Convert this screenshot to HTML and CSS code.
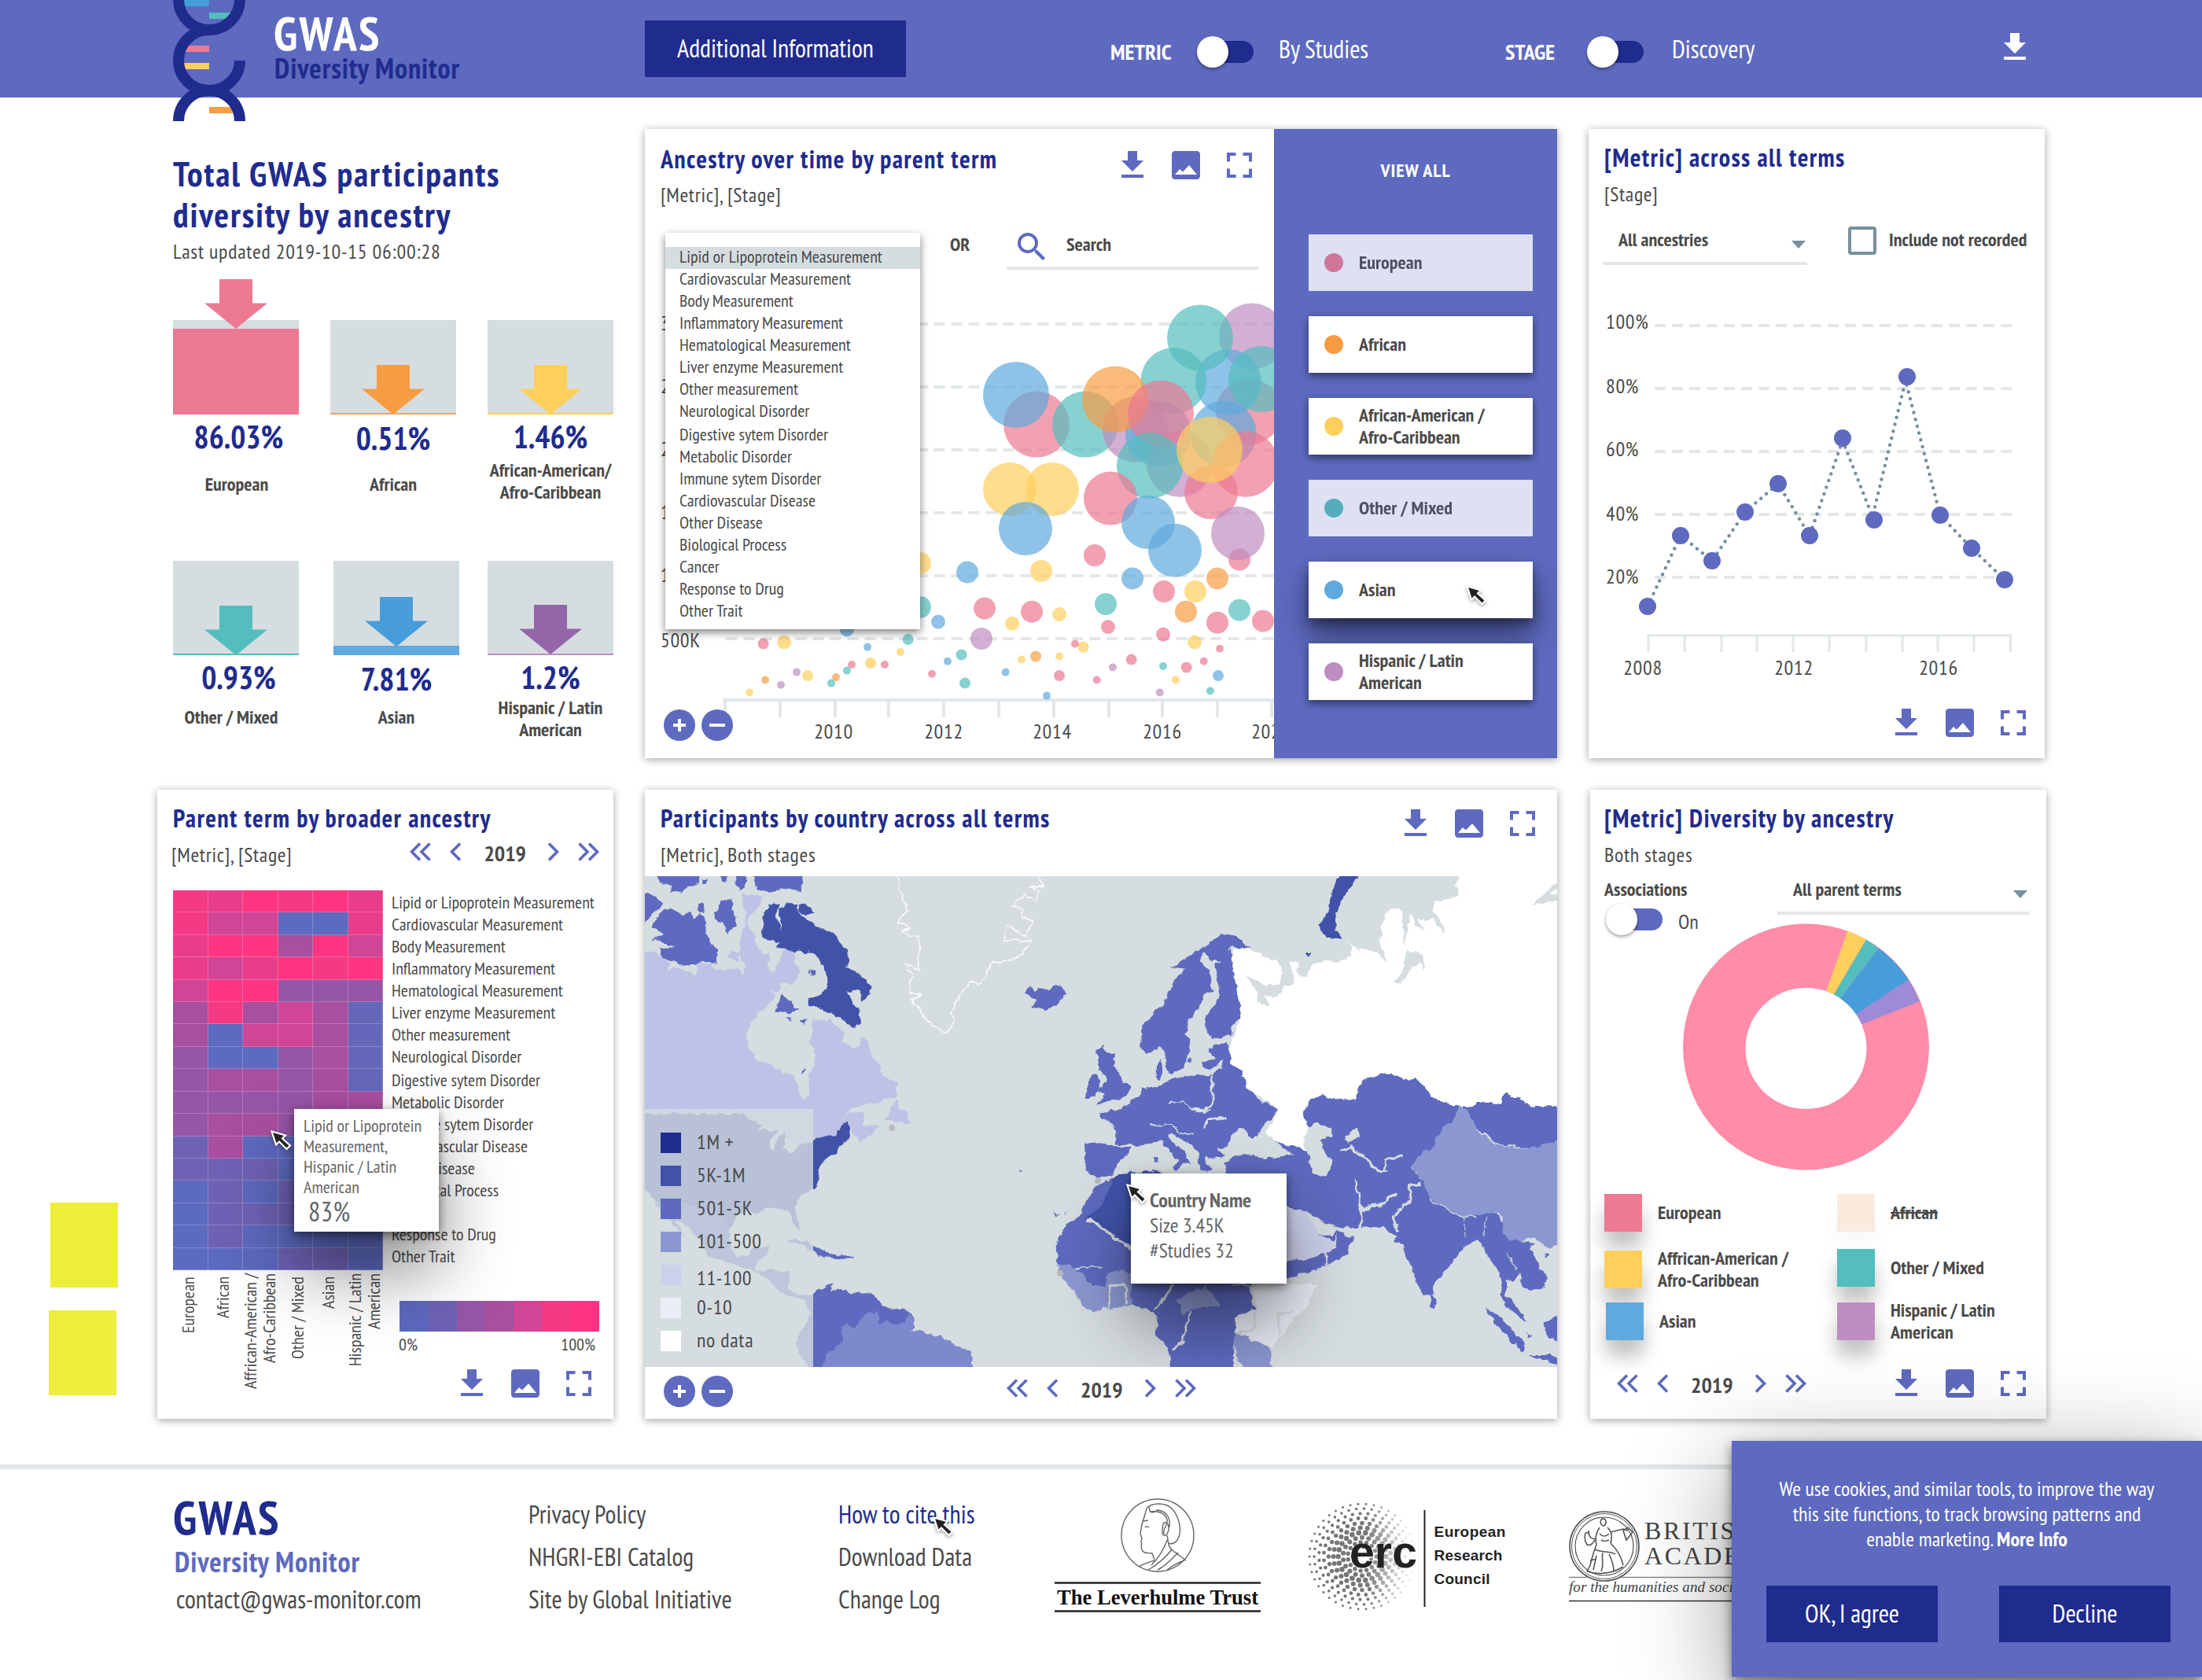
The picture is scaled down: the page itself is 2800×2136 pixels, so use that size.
FILE: index.html
```
<!DOCTYPE html>
<html lang="en">
<head>
<meta charset="utf-8">
<title>GWAS Diversity Monitor</title>
<link rel="stylesheet" href="styles.css">
</head>
<body>
<svg class="defs" width="0" height="0" aria-hidden="true">
  <symbol id="i-download" viewBox="0 0 24 24"><path d="M19 9h-4V3H9v6H5l7 7 7-7zM5 18v2h14v-2H5z"/></symbol>
  <symbol id="i-image" viewBox="0 0 24 24"><path fill-rule="evenodd" d="M21 19V5c0-1.100-.9-2-2-2H5c-1.100 0-2 .9-2 2v14c0 1.100.9 2 2 2h14c1.100 0 2-.9 2-2zM5 18l3-3.500 2 1.800 4-4.300 5 6z"/></symbol>
  <symbol id="i-full" viewBox="0 0 24 24"><path d="M4 4h5.750v2H6v3.750H4zM14.250 4H20v5.750h-2V6h-3.750zM4 14.250h2V18h3.750v2H4zM18 14.250h2V20h-5.750v-2H18z"/></symbol>
  <symbol id="i-search" viewBox="0 0 24 24"><path d="M15.500 14h-.79l-.28-.27A6.470 6.470 0 0 0 16 9.500 6.500 6.500 0 1 0 9.500 16c1.610 0 3.090-.59 4.230-1.570l.27.28v.79l5 4.990L20.490 19l-4.990-5zm-6 0C7.010 14 5 11.990 5 9.500S7.010 5 9.500 5 14 7.010 14 9.500 11.990 14 9.500 14z"/></symbol>
  <symbol id="i-prev" viewBox="0 0 14 24"><path d="M13 1.500L2.500 12 13 22.500" fill="none" stroke="currentColor" stroke-width="3.600"/></symbol>
  <symbol id="i-next" viewBox="0 0 14 24"><path d="M1 1.500L11.500 12 1 22.500" fill="none" stroke="currentColor" stroke-width="3.600"/></symbol>
  <symbol id="i-first" viewBox="0 0 27 24"><path d="M13 1.500L2.500 12 13 22.500M25.500 1.500L15 12l10.500 10.500" fill="none" stroke="currentColor" stroke-width="3.600"/></symbol>
  <symbol id="i-last" viewBox="0 0 27 24"><path d="M1.500 1.500L12 12 1.500 22.500M14 1.500L24.500 12 14 22.500" fill="none" stroke="currentColor" stroke-width="3.600"/></symbol>
  <symbol id="i-plus" viewBox="0 0 40 40"><circle cx="20" cy="20" r="20"/><path d="M12 20h16M20 12v16" stroke="#fff" stroke-width="4"/></symbol>
  <symbol id="i-minus" viewBox="0 0 40 40"><circle cx="20" cy="20" r="20"/><path d="M10 20h20" stroke="#fff" stroke-width="4"/></symbol>
  <symbol id="i-arrow" viewBox="0 0 80 63"><path d="M19 0h42v30.500h19L40 63 0 30.500h19z"/></symbol>
  <symbol id="i-cursor" viewBox="0 0 30 30"><path d="M2.500 2.500L20 7.500 16 11.500 26 20.500 21.500 25 12 15.500 8 19.500z" fill="#222" stroke="#fff" stroke-width="2.200"/></symbol>
</svg>

<header class="top">
  <div class="brand">
    <svg class="dna" viewBox="220 0 92 154">
      <path fill="#479DD9" d="M230 0h36v8h-36z"/><path fill="#54BDBD" d="M266 16h30v8h-30z"/>
      <path fill="#ED7992" d="M230 58h36v8h-36z"/><path fill="#FFCF5C" d="M232 80h34v8h-34z"/><path fill="#F69D44" d="M266 136h32v8h-32z"/>
      <path fill="none" stroke="#202B8E" stroke-width="14" d="M227-1A39 39 0 0 0 305-1M266 38A39 39 0 0 0 227 77A39 38 0 0 0 305 77M227 154A39 39 0 0 1 305 154"/>
    </svg>
    <div><div class="brand-name">GWAS</div><div class="brand-sub">Diversity Monitor</div></div>
  </div>
  <div class="info"><button class="btn wide">Additional Information</button></div>
  <div class="switch metric"><b>METRIC</b><i class="toggle navy"></i><span>By Studies</span></div>
  <div class="switch stage"><b>STAGE</b><i class="toggle navy"></i><span>Discovery</span></div>
  <svg class="ico top-dl"><use href="#i-download"/></svg>
</header>

<main class="board">
  <section class="totals">
    <h1>Total GWAS participants<br>diversity by ancestry</h1>
    <p class="updated">Last updated 2019-10-15 06:00:28</p>
    <div class="tiles">
      <div class="tile one nudge"><div class="gauge"><i style="height:109px;background:#ED7992"></i><svg style="bottom:109px;fill:#ED7992"><use href="#i-arrow"/></svg></div><b class="pct">86.03%</b><span>European</span></div>
      <div class="tile one"><div class="gauge"><i style="height:2px;background:#E6A468"></i><svg style="bottom:0;fill:#F69D44"><use href="#i-arrow"/></svg></div><b class="pct low">0.51%</b><span>African</span></div>
      <div class="tile"><div class="gauge"><i style="height:2px;background:#FFCF5C"></i><svg style="bottom:0;fill:#FFCF5C"><use href="#i-arrow"/></svg></div><b class="pct">1.46%</b><span>African-American/<br>Afro-Caribbean</span></div>
      <div class="tile one second nudge left"><div class="gauge"><i style="height:2px;background:#54BDBD"></i><svg style="bottom:0;fill:#54BDBD"><use href="#i-arrow"/></svg></div><b class="pct">0.93%</b><span>Other / Mixed</span></div>
      <div class="tile one second shifted"><div class="gauge"><i style="height:12px;background:#5EA9DD"></i><svg style="bottom:11px;fill:#479DD9"><use href="#i-arrow"/></svg></div><b class="pct low">7.81%</b><span>Asian</span></div>
      <div class="tile second"><div class="gauge"><i style="height:2px;background:#BF8DC0"></i><svg style="bottom:1px;fill:#9366A9"><use href="#i-arrow"/></svg></div><b class="pct">1.2%</b><span>Hispanic / Latin<br>American</span></div>
    </div>
  </section>

  <section class="card timeline">
    <div class="plot">
      <div class="head tall">
        <div><h2>Ancestry over time by parent term</h2><p class="sub">[Metric], [Stage]</p></div>
        <div class="tools"><svg class="ico"><use href="#i-download"/></svg><svg class="ico"><use href="#i-image"/></svg><svg class="ico"><use href="#i-full"/></svg></div>
      </div>
      <div class="filters"><b>OR</b><div class="search"><svg class="ico"><use href="#i-search"/></svg><b>Search</b></div></div>
      <svg class="scatter" viewBox="820 360 800 604">
        <g class="grid"><path d="M923.500 412H1620M923.500 492H1620M923.500 572H1620M923.500 652H1620M923.500 732H1620M923.500 812H1620"/></g>
        <path id="time-axis" class="axis" stroke-width="4"/>
        <g class="axis-text">
          <text x="840" y="420">3M</text><text x="840" y="500">2.5M</text><text x="840" y="580">2M</text><text x="840" y="660">1.5M</text><text x="840" y="740">1M</text><text x="840" y="823">500K</text>
          <g text-anchor="middle"><text x="1060" y="939">2010</text><text x="1200" y="939">2012</text><text x="1338" y="939">2014</text><text x="1478" y="939">2016</text><text x="1616" y="939">2020</text></g>
        </g>
        <g id="bubbles"></g>
      </svg>
      <div class="zoomers over"><svg><use href="#i-plus"/></svg><svg><use href="#i-minus"/></svg></div>
      <ul class="menu">
        <li class="on">Lipid or Lipoprotein Measurement</li><li>Cardiovascular Measurement</li><li>Body Measurement</li><li>Inflammatory Measurement</li><li>Hematological Measurement</li><li>Liver enzyme Measurement</li><li>Other measurement</li><li>Neurological Disorder</li><li class="gap">Digestive sytem Disorder</li><li>Metabolic Disorder</li><li>Immune sytem Disorder</li><li>Cardiovascular Disease</li><li>Other Disease</li><li>Biological Process</li><li>Cancer</li><li>Response to Drug</li><li>Other Trait</li>
      </ul>
    </div>
    <aside class="groups">
      <b class="all">VIEW ALL</b>
      <div class="chip off"><i style="background:#ED7992"></i>European</div>
      <div class="chip"><i style="background:#F69D44"></i>African</div>
      <div class="chip"><i style="background:#FFCF5C"></i>African-American /<br>Afro-Caribbean</div>
      <div class="chip off"><i style="background:#54BDBD"></i>Other / Mixed</div>
      <div class="chip hover"><i style="background:#5EA9DD"></i>Asian<svg class="cursor"><use href="#i-cursor"/></svg></div>
      <div class="chip"><i style="background:#BF8DC0"></i>Hispanic / Latin<br>American</div>
    </aside>
  </section>

  <section class="card metric-card">
    <div class="head"><div><h2>[Metric] across all terms</h2><p class="sub">[Stage]</p></div></div>
    <div class="options"><div class="select"><b>All ancestries</b><i class="caret"></i></div><i class="check"></i><b class="check-label">Include not recorded</b></div>
    <svg class="line" viewBox="2020 337 580 543">
      <g class="grid"><path d="M2104 414H2558M2104 494H2558M2104 574H2558M2104 654H2558M2104 734H2558"/></g>
      <path id="year-axis" class="axis" stroke-width="3"/>
      <g class="axis-text">
        <text x="2042" y="418">100%</text><text x="2042" y="500">80%</text><text x="2042" y="580">60%</text><text x="2042" y="662">40%</text><text x="2042" y="742">20%</text>
        <g text-anchor="middle"><text x="2089" y="858">2008</text><text x="2281" y="858">2012</text><text x="2465" y="858">2016</text></g>
      </g>
      <path class="dots" d="M2095 771L2137 681L2177 713L2219 651L2261 615L2301 681L2343 560L2381 657L2423 484L2467 655L2507 697L2549 737"/>
      <g fill="#5D6ABF"><circle cx="2095" cy="771" r="11"/><circle cx="2137" cy="681" r="11"/><circle cx="2177" cy="713" r="11"/><circle cx="2219" cy="651" r="11"/><circle cx="2261" cy="615" r="11"/><circle cx="2301" cy="681" r="11"/><circle cx="2343" cy="557" r="11"/><circle cx="2383" cy="661" r="11"/><circle cx="2425" cy="479" r="11"/><circle cx="2467" cy="655" r="11"/><circle cx="2507" cy="697" r="11"/><circle cx="2549" cy="737" r="11"/></g>
    </svg>
    <div class="tools"><svg class="ico"><use href="#i-download"/></svg><svg class="ico"><use href="#i-image"/></svg><svg class="ico"><use href="#i-full"/></svg></div>
  </section>

  <section class="card heat-card">
    <h2>Parent term by broader ancestry</h2>
    <div class="head-row"><p class="sub">[Metric], [Stage]</p>
      <div class="pager"><svg class="w2"><use href="#i-first"/></svg><svg><use href="#i-prev"/></svg><b>2019</b><svg><use href="#i-next"/></svg><svg class="w2"><use href="#i-last"/></svg></div></div>
    <div class="heat-body">
      <div class="heat" id="heat"></div>
      <ul class="terms"><li>Lipid or Lipoprotein Measurement</li><li>Cardiovascular Measurement</li><li>Body Measurement</li><li>Inflammatory Measurement</li><li>Hematological Measurement</li><li>Liver enzyme Measurement</li><li>Other measurement</li><li>Neurological Disorder</li><li class="gap">Digestive sytem Disorder</li><li>Metabolic Disorder</li><li>Immune sytem Disorder</li><li>Cardiovascular Disease</li><li>Other Disease</li><li>Biological Process</li><li>Cancer</li><li>Response to Drug</li><li>Other Trait</li></ul>
    </div>
    <div class="heat-foot">
      <div class="cols"><span>European</span><span>African</span><span class="hi">Affrican-American /<br>Afro-Caribbean</span><span class="mid">Other / Mixed</span><span>Asian</span><span class="hi">Hispanic / Latin<br>American</span></div>
      <div class="key">
        <div class="ramp"><i></i><i></i><i></i><i></i><i></i><i></i><i></i></div>
        <div class="ends"><span>0%</span><span>100%</span></div>
        <div class="tools"><svg class="ico"><use href="#i-download"/></svg><svg class="ico"><use href="#i-image"/></svg><svg class="ico"><use href="#i-full"/></svg></div>
      </div>
    </div>
    <div class="tip heat-tip">Lipid or Lipoprotein<br>Measurement,<br>Hispanic / Latin<br>American<strong>83%</strong></div>
    <svg class="cursor"><use href="#i-cursor"/></svg>
  </section>

  <section class="card map-card">
    <div class="head">
      <div><h2>Participants by country across all terms</h2><p class="sub">[Metric], Both stages</p></div>
      <div class="tools"><svg class="ico"><use href="#i-download"/></svg><svg class="ico"><use href="#i-image"/></svg><svg class="ico"><use href="#i-full"/></svg></div>
    </div>
    <div class="map">
      <svg viewBox="0 0 1160 624">
        <filter id="coast" x="-5%" y="-5%" width="110%" height="110%"><feTurbulence type="fractalNoise" baseFrequency=".09" numOctaves="3" seed="4"/><feDisplacementMap in="SourceGraphic" scale="8" xChannelSelector="R" yChannelSelector="G"/></filter>
        <g filter="url(#coast)">
        <g transform="translate(-10 -114) scale(.3827 .5165)">
          <path fill="#BFC2E6" d="M0 400L60 412 97 420 110 438 97 450 150 447 185 462 197 470 200 445 187 432 210 430 225 440 245 432 262 450 290 452 320 445 345 455 350 462 360 440 345 425 340 390 360 340 358 310 350 265 420 270 405 300 375 315 365 335 385 365 400 395 425 415 440 408 435 440 452 460 470 440 475 425 490 402 515 405 530 415 522 435 542 460 510 487 470 482 475 495 462 505 430 500 462 512 445 535 420 548 395 565 375 590 365 615 368 640 385 655 398 675 440 682 480 705 525 708 530 735 548 768 570 757 568 710 590 685 594 660 585 640 570 635 585 615 580 573 610 578 640 575 665 590 688 602 686 625 715 650 740 635 748 615 770 640 785 670 810 690 820 710 845 722 865 735 862 765 830 765 800 780 760 782 725 790 700 805 665 830 705 805 750 800 755 835 805 835 780 855 740 875 730 860 712 850 703 828 685 830 660 858 585 868 540 890 480 850 400 830 350 803 0 803zM820 820L845 795 860 768 868 775 865 790 900 800 903 830 880 828 850 822zM300 420L320 402 345 410 335 430z"/>
          <path fill="#4152A8" d="M0 805H350L385 825 420 835 400 845 470 845 450 860 440 885 455 900 460 880 475 855 490 850 495 865 485 890 500 900 520 900 545 880 585 872 600 865 660 858 685 830 703 828 708 860 670 885 668 905 640 908 620 920 605 945 595 985 560 1000 530 1020 525 1045 540 1075 535 1095 515 1070 500 1045 440 1035 400 1050 370 1040 330 1060 310 1090 285 1065 260 1045 200 1040 120 1020 70 1030 40 1000 0 985z"/>
          <path fill="#5D6ABF" d="M60 1025L120 1022 200 1040 260 1042 310 1088 308 1130 330 1155 370 1155 385 1135 440 1130 435 1150 400 1170 395 1190 440 1190 505 1195 500 1235 530 1250 580 1255 575 1265 520 1258 465 1240 440 1215 390 1190 340 1180 300 1170 240 1155 210 1120 150 1070 130 1068 160 1110 125 1080 100 1065zM495 1120L530 1112 585 1130 625 1142 637 1150 700 1155 722 1162 680 1163 640 1160 600 1152 560 1135 530 1124zM560 1262L605 1235 650 1222 640 1240 680 1235 700 1245 780 1248 815 1275 850 1285 880 1282 910 1300 925 1328 900 1345 700 1440H585L570 1428 535 1395 530 1375 550 1330 580 1300zM57 210H210L205 240 175 245 150 258 110 262 120 245 75 238zM215 228L235 228 230 240 215 238zM275 210H308L300 238 280 235zM328 210H365L362 250 345 255 322 240zM385 210H553L545 260 480 250 470 258 420 255 395 250zM0 262L60 268 88 290 60 305 26 335 0 340zM48 345L75 310 110 300 150 318 175 310 190 325 215 312 230 335 228 360 260 400 270 405 265 435 220 430 190 440 140 438 85 420 70 402 120 395 90 380 50 375 85 365zM198 290L228 290 225 312 200 305zM270 300L275 278 318 278 315 300 328 320 325 345 300 360 285 335 258 325 258 308zM460 555L475 510 500 520 520 540 540 550 505 558 485 550zM575 455L595 450 592 465 580 468zM497 570L515 568 512 580zM545 575L562 575 553 585zM545 700L562 695 550 708zM1287 508L1310 490 1320 505 1330 498 1370 500 1395 488 1410 490 1425 510 1400 535 1360 550 1310 543 1330 525zM1265 942L1285 942 1275 947zM1380 1048L1395 1056 1410 1052 1392 1060zM1420 1050L1436 1040 1425 1052z"/>
          <path fill="#4152A8" d="M415 365L420 320 435 290 475 285 462 320 480 360 470 300 500 288 530 292 540 320 560 325 600 345 650 360 670 375 700 405 705 430 695 445 740 460 778 490 775 510 750 530 730 500 700 505 720 535 735 550 740 585 718 595 680 575 650 560 610 545 570 540 568 522 600 515 635 495 632 470 620 445 600 420 570 405 555 410 520 405 460 395 480 385 430 380zM535 290L575 295 590 310 560 318 540 312z"/>
          <path fill="#7C89CC" d="M620 1440L625 1400 680 1370 675 1330 700 1325 720 1330 760 1300 800 1290 805 1325 830 1312 850 1328 890 1320 905 1298 925 1325 910 1340 980 1345 1030 1360 1060 1375 1110 1390 1118 1410 1110 1440z"/>
          <path fill="none" stroke="#fff" stroke-width="3" d="M855 210L872 240 880 270 900 305 880 315 868 335 905 345 880 360 935 370 940 400 930 420 945 448 890 438 915 470 900 480 915 510 945 512 915 525 950 560 960 580 1000 595 1025 607 1050 590 1055 570 1045 560 1075 510 1110 480 1140 485 1180 432 1230 430 1280 412 1312 380 1220 378 1230 340 1290 370 1315 330 1285 325 1280 300 1245 295 1290 265 1325 285 1335 255 1300 250 1350 242 1320 210"/>
        </g>
        <g transform="translate(580 -114) scale(.3827 .5165)">
          <path fill="#fff" d="M440 400L480 400 530 410 580 430 605 460 590 485 550 490 482 465 515 500 520 530 558 540 545 515 590 520 610 490 640 490 635 450 625 430 655 435 650 460 680 470 700 440 750 425 780 435 830 420 835 395 820 380 850 400 880 400 920 410 950 435 925 380 930 350 955 305 985 298 1000 310 1000 350 1015 410 1000 460 970 483 1000 485 1030 445 1060 435 1075 455 1070 415 1010 400 1020 340 1035 310 1045 345 1075 355 1050 330 1100 325 1130 350 1140 365 1140 340 1105 310 1110 285 1190 270 1180 240 1200 210H1540V800L1430 790 1200 800 1050 760 700 780 670 800 690 840 668 860 685 898 640 885 580 875 545 850 575 820 580 790 480 740 435 685 425 640 470 560 450 510 445 450 435 420z"/>
          <path fill="#D6DDE1" d="M1430 293L1480 260 1540 215V250L1490 262 1540 275 1480 285z"/>
          <path fill="#5D6ABF" d="M-53 765L-45 730-27 708-10 712-4 745-30 765zM-18 650L8 636 18 655 48 658 38 685 62 705 72 730 98 738 95 758 70 768 20 775-15 782 10 760-10 745 15 730 18 715-5 700-8 675zM-55 880L0 880 40 883 98 890 80 910 50 935 30 960-15 965-50 945zM-5 805L30 800 55 795 100 775 130 760 130 740 150 745 200 735 250 718 310 710 370 710 400 695 405 672 360 700 338 690 335 680 380 670 360 650 375 640 415 633 430 660 435 685 470 700 480 740 500 748 520 770 580 790 578 812 545 830 520 860 490 850 460 840 445 850 420 880 390 895 410 905 405 915 350 910 345 925 370 945 330 948 325 905 300 880 270 870 240 855 222 860 230 870 270 895 297 925 285 925 250 945 240 935 260 920 230 900 200 870 170 875 120 885 85 880 50 880 50 850 30 825 0 815zM135 640L133 590 185 555 220 520 240 480 280 450 235 447 300 415 345 395 385 370 430 362 465 378 495 400 465 398 430 395 405 430 365 428 340 412 325 430 362 450 370 505 340 515 330 545 290 575 280 610 300 625 295 650 275 690 240 707 220 705 212 665 200 640 165 657 145 655zM345 570L395 520 385 480 380 440 400 430 430 400 440 440 445 480 455 520 470 560 430 600 435 612 370 620 350 600zM180 690L200 668 205 700 195 725 180 720zM285 675L305 670 298 680zM175 910L192 910 190 927 175 925z"/>
          <path fill="#5D6ABF" d="M672 800L700 765 740 760 785 772 850 775 865 722 960 702 1025 728 1050 715 1100 765 1190 790 1165 830 1130 850 1105 885 1050 915 1030 940 1070 970 1090 1010 1200 1060 1300 1045 1340 1070 1340 1100 1410 1120 1440 1125 1420 1135 1450 1170 1478 1205 1475 1230 1425 1245 1400 1230 1390 1200 1370 1220 1350 1210 1345 1250 1400 1300 1415 1320 1390 1310 1350 1280 1325 1250 1335 1220 1300 1170 1280 1150 1255 1115 1215 1125 1200 1140 1145 1190 1110 1225 1105 1250 1070 1252 1040 1200 1010 1150 1005 1130 970 1120 985 1110 960 1100 940 1085 880 1087 800 1085 740 1075 700 1050 615 1035 550 1040 430 1000 410 930 440 910 500 905 570 915 640 905 600 890 580 872 640 885 690 900 700 955 750 960 770 920 740 900 720 870 770 860 760 840 710 830 690 840z"/>
          <path fill="#5D6ABF" d="M1095 1245L1112 1265 1108 1283 1095 1280zM1280 1285L1320 1300 1370 1340 1410 1370 1405 1393 1360 1365 1310 1320zM1470 1320L1540 1290V1375L1480 1350zM1420 1400L1480 1400 1540 1405V1425L1450 1410zM1470 1150L1490 1148 1480 1160zM1410 1345L1430 1352 1420 1358zM1205 790L1270 775 1330 782 1340 753 1390 770 1430 785 1540 792V865L1425 893 1310 878 1280 855 1250 845z"/>
          <path fill="#8B97D1" d="M1030 938L1050 915 1105 885 1110 860 1165 830 1190 792 1215 795 1250 840 1310 878 1420 893 1540 865V1125L1480 1135 1440 1110 1360 1120 1335 1095 1340 1060 1300 1045 1200 1060 1090 1010 1070 970z"/>
          <path fill="#D6DDE1" d="M690 845L720 830 765 840 770 858 720 860 735 900 770 915 755 955 705 955 690 925 705 900 680 860zM810 860L850 838 860 865 820 875zM425 895L440 870 480 850 520 860 545 850 600 885 600 900 550 915 480 905 430 905z"/>
          <path fill="#5D6ABF" d="M480 848L530 850 500 865zM-145 1175L-150 1130-120 1085-65 1052-60 1030-15 985 40 965 100 950 200 948 400 1000 460 1100 500 1230 510 1290 445 1310 440 1440H235L225 1390 185 1350 190 1300 150 1285 100 1275 50 1230-30 1230z"/>
          <path fill="#4152A8" d="M-50 1060L0 1035 45 960 100 950 200 950V1180L100 1140 0 1090zM800 210H862L840 240 800 275 780 310 780 355 800 377 750 372 722 340 755 310 765 265 780 235zM680 410L698 406 690 420z"/>
          <path fill="#8B97D1" d="M-145 1178L-110 1180-60 1195-30 1230 10 1230 20 1200 60 1188 100 1195V1275L30 1288 10 1280-25 1295-60 1280-90 1245-130 1210zM250 1260L350 1230 400 1280 310 1285 270 1300zM440 1350L500 1350 560 1380 570 1440H480L450 1405z"/>
          <path fill="#EBEEF7" d="M495 1230L720 1225 690 1275 620 1330 565 1382 445 1345 445 1310 510 1285z"/>
          <path fill="#CDD1EC" d="M600 1040L680 1045 720 1100 775 1120 770 1140 680 1165 600 1168z"/>
          <path fill="#5D6ABF" d="M600 1168L680 1165 745 1150 750 1180 690 1195 600 1215zM750 1145L780 1135 785 1095 840 1110 820 1145 755 1178zM725 1105L765 1105 790 1090 775 1120z"/>
          <path fill="none" stroke="#D6DDE1" stroke-width="7" d="M-42 1063L100 1137M850 965V1000L865 1040 930 1030 980 1000M865 1040L870 1070 855 1087M1065 975L1025 985 1030 1015 970 1060 985 1095M940 950L945 920 1000 910M800 900L830 885 930 950 950 945M340 410L375 450 378 500 390 520M368 712L372 780 340 800 300 795M340 840L360 815 415 818M30 1288L30 1230 80 1225 85 1275M180 1285L210 1260 240 1225M500 1235L515 1285 505 1340 445 1345M595 1345L590 1300 640 1290M240 1385L270 1365 300 1295"/>
          <path fill="none" stroke="#D6DDE1" stroke-width="3" d="M225 780L270 775 300 795 365 798M165 835L230 830 260 850 310 855M-85 1185L0 1183M1090 1015L1150 1040 1200 1060 1250 1058M1205 1060L1210 1110M1280 1060L1270 1110M1350 1150L1380 1190M1250 842L1310 878 1420 893M500 1230L440 1225"/>
        </g>
        </g>
        <g fill="#B9BABC"><circle cx="314" cy="320" r="4"/><circle cx="576" cy="387" r="4"/><circle cx="528" cy="505" r="4"/></g>
      </svg>
      <div class="scale"><span>1M +</span><span>5K-1M</span><span>501-5K</span><span>101-500</span><span class="drop">11-100</span><span>0-10</span><span>no data</span></div>
      <div class="tip map-tip"><b>Country Name</b><br>Size 3.45K<br>#Studies 32</div>
      <svg class="cursor"><use href="#i-cursor"/></svg>
    </div>
    <div class="map-foot">
      <div class="zoomers"><svg><use href="#i-plus"/></svg><svg><use href="#i-minus"/></svg></div>
      <div class="pager"><svg class="w2"><use href="#i-first"/></svg><svg><use href="#i-prev"/></svg><b>2019</b><svg><use href="#i-next"/></svg><svg class="w2"><use href="#i-last"/></svg></div>
    </div>
  </section>

  <section class="card donut-card">
    <div class="head"><div><h2>[Metric] Diversity by ancestry</h2><p class="sub">Both stages</p></div></div>
    <div class="assoc">
      <div><b>Associations</b><div class="assoc-on"><i class="toggle"></i><span>On</span></div></div>
      <div class="select long"><b>All parent terms</b><i class="caret"></i></div>
    </div>
    <svg class="donut" viewBox="2022 1170 580 330">
      <circle cx="2296.500" cy="1331" r="156.500" fill="#FF8CA8"/>
      <path fill="#FFCF5C" d="M2322 1260L2349.600 1183.500A156.500 156.500 0 0 1 2373 1194.700L2332 1264z"/>
      <path fill="#54BDBD" d="M2331 1266L2373 1194.700A156.500 156.500 0 0 1 2388.800 1205.500L2338 1272z"/>
      <path fill="#479DD9" d="M2338 1272L2388.800 1205.500A156.500 156.500 0 0 1 2427 1245.500L2359 1291z"/>
      <path fill="#9E8BD8" d="M2359 1290L2427 1245.500A156.500 156.500 0 0 1 2441 1273L2366 1303z"/>
      <circle cx="2296.500" cy="1333" r="77" fill="#fff"/>
    </svg>
    <div class="legend">
      <div class="item"><i style="background:#ED7992"></i>European</div>
      <div class="item off"><i></i><s>African</s></div>
      <div class="item"><i style="background:#FFCF5C"></i>Affrican-American /<br>Afro-Caribbean</div>
      <div class="item up"><i style="background:#54BDBD"></i>Other / Mixed</div>
      <div class="item in"><i style="background:#5EA9DD"></i>Asian</div>
      <div class="item"><i style="background:#BF8DC0"></i>Hispanic / Latin<br>American</div>
    </div>
    <div class="donut-foot">
      <div class="pager"><svg class="w2"><use href="#i-first"/></svg><svg><use href="#i-prev"/></svg><b>2019</b><svg><use href="#i-next"/></svg><svg class="w2"><use href="#i-last"/></svg></div>
      <div class="tools"><svg class="ico"><use href="#i-download"/></svg><svg class="ico"><use href="#i-image"/></svg><svg class="ico"><use href="#i-full"/></svg></div>
    </div>
  </section>
</main>

<div class="note upper"></div>
<div class="note lower"></div>

<footer class="bottom">
  <div class="about"><div class="brand-name">GWAS</div><div class="brand-sub">Diversity Monitor</div><p>contact@gwas-monitor.com</p></div>
  <nav class="links first"><a>Privacy Policy</a><a>NHGRI-EBI Catalog</a><a>Site by Global Initiative</a></nav>
  <nav class="links"><a class="hot">How to cite this<svg class="cursor"><use href="#i-cursor"/></svg></a><a>Download Data</a><a>Change Log</a></nav>
  <svg class="logo trust" viewBox="1341 1900 264 155">
    <g fill="none" stroke="#666" stroke-width="1.400"><circle cx="1472" cy="1952" r="46"/>
      <path d="M1458 1918c6-8 24-8 32 0 8 8 14 26 8 38-2 6-10 8-12 6M1458 1918c-2 8-4 14-6 20l-2 12 2 6-1 4c2 4-2 8 2 12 3 4 8 2 12 3l3 8M1462 1922c10-2 20 2 22 10 2 6-6 12-4 18M1470 1920c14 0 20 12 16 24M1462 1916c-2 6 2 8 6 6M1480 1936c6-2 8 8 4 14-2 4-6 2-6-2s0-10 2-12M1484 1952c2 8 0 14 8 20l16 12M1468 1984c-6 2-14 4-20 8M1484 1958c-4 12-10 22-20 32M1490 1970c-6 8-16 18-30 26M1498 1974c-8 8-14 16-26 22M1506 1984c-6 2-14 6-22 12M1454 1934l6-1M1456 1942c2-2 4-1 5 0"/></g>
    <path d="M1341 2012.500h262M1341 2048.500h262" stroke="#222" stroke-width="2.500"/>
    <text x="1344" y="2040" textLength="256" lengthAdjust="spacingAndGlyphs" class="serif-b">The Leverhulme Trust</text>
  </svg>
  <svg class="logo erc" viewBox="1655 1900 270 155">
    <g id="erc-dots"></g>
    <text x="1716" y="1993" textLength="86" lengthAdjust="spacingAndGlyphs" class="erc-text">erc</text>
    <path d="M1811.500 1920v123" stroke="#222" stroke-width="2"/>
    <g class="sans-b"><text x="1823.500" y="1953.500" textLength="91">European</text><text x="1823.500" y="1983.500" textLength="87">Research</text><text x="1823.500" y="2013.500" textLength="71">Council</text></g>
  </svg>
  <svg class="logo academy" viewBox="1990 1900 300 155">
    <g fill="none" stroke="#555"><circle cx="2040" cy="1966" r="44" stroke-width="1.600"/><circle cx="2040" cy="1966" r="41.500"/><circle cx="2040" cy="1966" r="37" stroke-width="1.200"/>
    <g stroke-width="1.600"><path d="M2036 1932c6-4 8 4 4 8-4 0-6-4-4-8M2034 1942c-4 6-6 14-4 22M2044 1942c6 6 6 12 4 20M2048 1948l16-4 6 2M2030 1964c-4 10-6 18-8 26l-4 8M2048 1962c8 8 14 18 16 28M2028 1970c8 4 20 2 26 6M2030 1978l-4 18M2038 1974c-2 8 2 16-2 24M2046 1976c4 8 6 14 6 22M2018 1998c14 4 30 4 46-6M2064 1946l4 12 8-10-6-6zM2034 1950c4 4 8 4 12 0M2036 1958c4 2 6 2 10 0M2022 1984l8-2M2020 1950c-6-6-6 8-2 14 4 2 8-2 10-6M2020 1946c0 8 4 12 10 10"/></g></g>
    <g class="serif"><text x="2091" y="1957" letter-spacing="2.600">BRITISH</text><text x="2091" y="1989" letter-spacing="2.600">ACADEMY</text></g>
    <path d="M1995 2005.500h24M2061 2005.500h229" stroke="#888" stroke-width="1.500"/><path d="M1995 2035.500h295" stroke="#333" stroke-width="1.600"/>
    <text x="1995" y="2024" class="serif-i">for the humanities and social sciences</text>
  </svg>
</footer>

<div class="cookie">
  <p>We use cookies, and similar tools, to improve the way<br>this site functions, to track browsing patterns and<br>enable marketing. <b>More Info</b></p>
  <div class="cookie-btns"><button class="btn">OK, I agree</button><button class="btn">Decline</button></div>
</div>
<script src="app.js"></script>
</body>
</html>
```
FILE: styles.css
```
* { box-sizing: border-box; }
body { margin: 0; width: 2800px; height: 2136px; position: relative; overflow: hidden; background: #fff; color: #4a4a4a; font-family: "PT Sans Narrow", "Open Sans", sans-serif; font-size: 24px; line-height: 28px; }
h1, h2, p, ul { margin: 0; padding: 0; }
li { list-style: none; }
i { font-style: normal; display: block; }
svg { display: block; flex: none; }
.defs { position: absolute; }
button { font: inherit; border: 0; padding: 0; }
.btn { background: #202b8e; color: #fff; font-size: 32px; line-height: 70px; height: 72px; width: 218px; padding-bottom: 2px; }
.btn.wide { width: 332px; }
.ico { width: 48px; height: 48px; fill: #5d6abf; }
.tools { display: flex; gap: 20px; }
.cursor { width: 30px; height: 30px; position: absolute; filter: drop-shadow(0 2px 2px rgba(0,0,0,.35)); }

.top { height: 124px; background: #5d6abf; color: #fff; display: flex; align-items: flex-start; padding-left: 220px; }
.brand { width: 600px; display: flex; gap: 36px; flex: none; }
.dna { width: 92px; height: 154px; position: relative; z-index: 1; }
.brand-name { font-weight: 700; font-size: 60px; line-height: 54px; letter-spacing: 2.4px; }
.brand-sub { font-weight: 700; font-size: 36px; line-height: 36px; letter-spacing: .95px; color: #202b8e; padding-left: 1px; white-space: nowrap; }
.brand .brand-name { padding-top: 15px; }
.info { width: 592px; padding-top: 26px; flex: none; }
.switch { display: flex; align-items: flex-start; padding-top: 46px; flex: none; }
.switch b { font-size: 28px; line-height: 40px; width: 110px; }
.switch.stage b { width: 104px; }
.switch span { font-size: 32px; line-height: 32px; padding-left: 32px; }
.switch.stage span { padding-left: 36px; }
.switch.metric { width: 502px; }
.switch.stage { width: 624px; }
.toggle { width: 72px; height: 40px; position: relative; flex: none; }
.toggle::before { content: ""; position: absolute; left: 8px; top: 6px; width: 64px; height: 28px; border-radius: 14px; background: #5d6abf; }
.toggle.navy::before { background: #202b8e; }
.toggle::after { content: ""; position: absolute; left: 0; top: 0; width: 40px; height: 40px; border-radius: 50%; background: #fff; box-shadow: 0 2px 4px rgba(0,0,0,.4); }
.top-dl { fill: #fff; margin-top: 36px; }

.board { display: grid; grid-template-columns: 580px 1160px 580px; grid-template-rows: 800px 800px; gap: 40px; padding: 40px 200px 0; }
.card { background: #fff; box-shadow: 0 2px 10px rgba(0,0,0,.36); position: relative; min-width: 0; }
h2 { color: #202b8e; font-size: 32px; line-height: 40px; letter-spacing: 1.34px; white-space: nowrap; }
.sub, .updated { font-size: 26px; line-height: 32px; letter-spacing: .7px; margin-top: 11px; white-space: nowrap; }
.head { display: flex; justify-content: space-between; padding: 16px 20px 0; }
.head .tools { margin-top: 3px; }
.head.tall { padding-top: 18px; }
.head.tall .sub { margin-top: 10px; }
.head.tall .tools { margin-top: 4px; }

.totals { padding: 31px 0 0 20px; }
h1 { color: #202b8e; font-size: 44px; line-height: 52px; letter-spacing: 1.84px; }
.updated { margin-top: 5px; letter-spacing: .76px; }
.tiles { display: grid; grid-template-columns: 160px 160px 160px; gap: 0 40px; grid-auto-rows: 306px; margin-top: 71px; }
.tile { text-align: center; font-weight: 700; display: flex; flex-direction: column; }
.tile.shifted { margin: 0 -4px 0 4px; }
.gauge { height: 120px; background: #d6dde1; position: relative; display: flex; align-items: flex-end; }
.gauge i { width: 100%; }
.gauge svg { position: absolute; left: 40px; width: 80px; height: 63px; }
.pct { color: #202b8e; font-size: 40px; line-height: 48px; margin-top: 4px; height: 53px; }
.pct.low { padding-top: 2px; }
.nudge .pct { padding-left: 7px; }
.nudge > span { padding-left: 2px; }
.one > span { padding-top: 18px; }
.second .pct { height: 49px; }
.second.one > span { padding-top: 12px; }
.left > span { padding-right: 14px; }

.timeline { display: flex; }
.plot { width: 800px; position: relative; }
.filters { display: flex; margin-top: 26px; height: 53px; padding-left: 388px; }
.filters > b { width: 72px; padding-top: 7px; }
.search { width: 320px; border-bottom: 4px solid #e2e7ea; display: flex; padding-left: 8px; }
.search b { padding: 7px 0 0 20px; }
.scatter { width: 800px; height: 604px; margin-top: 17px; }
.grid { stroke: #e2e7ea; stroke-width: 4; stroke-dasharray: 14 8; fill: none; }
.axis { stroke: #e2e7ea; fill: none; }
.axis-text { font-size: 26px; letter-spacing: .7px; fill: #4a4a4a; }
.zoomers { display: flex; gap: 8px; fill: #5d6abf; }
.zoomers svg { width: 40px; height: 40px; }
.zoomers.over { position: absolute; left: 24px; top: 738px; }
.menu { position: absolute; left: 26px; top: 132px; width: 324px; height: 504px; padding-top: 18px; background: #fff; box-shadow: 0 4px 10px rgba(0,0,0,.5); font-size: 22px; }
.menu li { padding-left: 18px; height: 28px; line-height: 24px; }
.menu li.gap { margin-top: 2px; }
.menu .on { background: #d6dde1; }
.groups { width: 360px; background: #5d6abf; display: flex; flex-direction: column; gap: 32px; padding: 39px 0 0 44px; font-weight: 700; }
.all { color: #fff; letter-spacing: 1px; width: 272px; text-align: center; margin-bottom: 35px; }
.chip { width: 285px; height: 72px; background: #fff; display: flex; align-items: center; padding-left: 20px; box-shadow: 0 4px 10px rgba(0,0,0,.5); position: relative; }
.chip i { width: 24px; height: 24px; border-radius: 50%; margin-right: 20px; flex: none; }
.chip.off { opacity: .8; box-shadow: none; }
.chip.hover { box-shadow: 0 6px 12px rgba(0,0,0,.35), 0 22px 36px rgba(0,0,0,.45); }
.chip.hover .cursor { left: 199px; top: 29px; }

.options { display: flex; padding: 25px 0 0 18px; height: 74px; }
.select { width: 260px; height: 49px; border-bottom: 4px solid #e2e7ea; display: flex; justify-content: space-between; padding: 3px 2px 0 20px; }
.caret { border: 9px solid transparent; border-top: 10px solid #76909d; border-bottom: 0; margin-top: 15px; width: 18px; height: 10px; }
.check { width: 36px; height: 36px; border: 4px solid #76909d; border-radius: 4px; margin: 0 16px 0 52px; }
.check-label { padding-top: 3px; }
.line { width: 580px; height: 543px; }
.dots { fill: none; stroke: #76909d; stroke-width: 4.500; stroke-linecap: round; stroke-dasharray: 0 9; }
.metric-card > .tools { justify-content: flex-end; padding: 15px 16px 0 0; }

.heat-card { padding: 16px 0 0 20px; }
.heat-card h2 { margin-bottom: 11px; }
.head-row { display: flex; justify-content: space-between; padding-right: 18px; height: 32px; }
.head-row .sub { margin: 0 0 0 -2px; }
.head-row .pager { margin-top: -4px; }
.pager { display: flex; align-items: center; gap: 24px; height: 32px; color: #5d6abf; }
.pager svg { width: 14px; height: 24px; }
.pager svg.w2 { width: 27px; }
.pager b { color: #4a4a4a; font-size: 28px; line-height: 32px; padding-top: 3px; margin: 0 4px 0 5px; }
.heat-body { display: flex; margin-top: 29px; height: 483px; }
.heat { width: 267px; display: grid; grid-template-columns: repeat(6, 1fr); grid-template-rows: repeat(17, 1fr); }
.heat i { border: solid rgba(255,255,255,.22); border-width: 0 1px 1px 0; }
.terms { padding: 1px 0 0 11px; font-size: 22px; white-space: nowrap; }
.terms li { height: 28px; }
.terms .gap { margin-top: 2px; }
.heat-foot { display: flex; }
.cols { width: 288px; display: flex; font-size: 22px; line-height: 24px; height: 160px; }
.cols span { writing-mode: vertical-rl; transform: rotate(180deg); text-align: end; width: 44.400px; height: 152px; padding: 0 7px 8px 0; white-space: nowrap; }
.cols .hi { padding: 0 0 4px; transform: translateX(-3px) rotate(180deg); }
.cols .mid { padding-right: 13px; }
.key { padding-top: 39px; }
.ramp { width: 254px; height: 39px; display: grid; grid-template-columns: repeat(7, 1fr); }
.ramp i:nth-child(1) { background: #5c6abf; }
.ramp i:nth-child(2) { background: #6f62b5; }
.ramp i:nth-child(3) { background: #9755a7; }
.ramp i:nth-child(4) { background: #a84fa0; }
.ramp i:nth-child(5) { background: #d04596; }
.ramp i:nth-child(6) { background: #f43985; }
.ramp i:nth-child(7) { background: #ff3582; }
.ends { display: flex; justify-content: space-between; font-size: 22px; margin: 2px 5px 12px -1px; }
.key .tools { padding-left: 68px; }
.tip { position: absolute; background: #fff; color: #666; box-shadow: 0 4px 12px rgba(0,0,0,.5), 0 50px 90px rgba(0,0,0,.45); white-space: nowrap; }
.heat-tip { left: 174px; top: 406px; width: 184px; height: 156px; font-size: 22px; line-height: 26px; padding: 8px 0 0 12px; }
.heat-tip strong { display: block; font-weight: 400; font-size: 34px; line-height: 36px; padding-left: 6px; letter-spacing: .5px; }
.heat-card > .cursor { left: 143px; top: 432px; }

.map-card .head { height: 110px; }
.map { position: relative; height: 624px; background: #d6dde1; }
.map > svg:first-child { width: 1160px; height: 624px; overflow: hidden; }
.scale { position: absolute; left: 0; top: 296px; width: 214px; height: 328px; background: rgba(214,221,225,.8); padding: 30px 0 0 20px; font-size: 26px; letter-spacing: .7px; }
.scale span { display: flex; height: 42px; line-height: 23px; }
.scale span::before { content: ""; width: 26px; height: 26px; margin-right: 20px; background: #fff; }
.scale span:nth-child(1)::before { background: #202b8e; }
.scale span:nth-child(2)::before { background: #4152a8; }
.scale span:nth-child(3)::before { background: #5d6abf; }
.scale span:nth-child(4)::before { background: #8b97d1; }
.scale span:nth-child(5)::before { background: #cdd1ec; }
.scale span:nth-child(6)::before { background: #ebeef7; }
.scale .drop { line-height: 34px; }
.map-tip { left: 618px; top: 378px; width: 198px; height: 140px; font-size: 26px; line-height: 32px; padding: 18px 0 0 24px; }
.map > .cursor { left: 611px; top: 390px; }
.map-foot { display: flex; position: relative; background: #fff; height: 66px; padding: 11px 0 0 24px; }
.map-foot .pager { margin-left: 348px; }

.donut-card { margin: 0 -2px 0 2px; }
.donut-card .head, .donut-card .assoc { padding-left: 18px; }
.assoc { display: flex; justify-content: space-between; margin-top: 14px; height: 53px; padding-right: 22px; }
.assoc-on { display: flex; margin: 4px 0 0 2px; }
.assoc-on span { font-size: 26px; line-height: 45px; padding-left: 20px; }
.select.long { width: 320px; height: 46px; padding-top: 0; padding-right: 2px; }
.select.long .caret { margin-top: 15px; }
.donut { width: 580px; height: 330px; }
.legend { display: grid; grid-template-columns: 296px 1fr; grid-template-rows: 72px 66px 48px; padding: 18px 0 0 18px; font-weight: 700; }
.item { display: flex; align-items: center; height: 48px; }
.item i { width: 48px; height: 48px; margin-right: 20px; flex: none; box-shadow: 0 20px 24px rgba(0,0,0,.25); }
.item.off i { background: #fbebdf; box-shadow: 0 20px 24px rgba(0,0,0,.03); }
.item.up { margin-top: -2px; }
.item.in { padding-left: 2px; }
.donut-foot { display: flex; justify-content: space-between; padding: 31px 18px 0 34px; }
.donut-foot .pager { margin-top: 8px; }

.note { position: absolute; width: 86px; height: 108px; background: #ecee3a; }
.note.upper { left: 64px; top: 1529px; }
.note.lower { left: 62px; top: 1666px; }

.bottom { margin-top: 58px; border-top: 6px solid #e2e7ea; height: 274px; display: flex; padding-left: 220px; font-size: 32px; letter-spacing: .07px; }
.about { width: 452px; padding-top: 29px; flex: none; }
.about .brand-name { color: #202b8e; line-height: 64px; }
.about .brand-sub { color: #5d6abf; line-height: 44px; padding: 3px 0 0 2px; }
.about p { line-height: 40px; padding: 5px 0 0 4px; }
.links { display: flex; flex-direction: column; padding-top: 30px; width: 275px; flex: none; }
.links.first { width: 394px; }
.links a { line-height: 54px; position: relative; }
.links .hot { color: #202b8e; }
.links .cursor { left: 119px; top: 29px; }
.logo { margin-top: 32px; height: 155px; }
.trust { width: 264px; }
.erc { width: 270px; margin-left: 50px; }
.academy { width: 300px; margin-left: 65px; }
.serif { font: 32px "Liberation Serif", serif; fill: #444; }
.serif-b { font: 700 28px "Liberation Serif", serif; fill: #111; letter-spacing: 0; }
.serif-i { font: italic 19px "Liberation Serif", serif; fill: #444; }
.sans-b { font: 700 19px "Liberation Sans", sans-serif; fill: #222; }
.erc-text { font: 700 58px "Liberation Sans", sans-serif; fill: #222; }

.cookie { position: absolute; left: 2202px; top: 1832px; width: 598px; height: 300px; background: #5d6abf; color: #fff; box-shadow: 0 6px 14px rgba(0,0,0,.5), 0 30px 130px rgba(0,0,0,.4); text-align: center; }
.cookie p { font-size: 26px; line-height: 32px; padding: 45px 0 43px; letter-spacing: .05px; }
.cookie-btns { display: flex; gap: 78px; padding-left: 44px; }
```
FILE: app.js
```
const NS = 'http://www.w3.org/2000/svg';
const add = (parent, name, attrs) => {
  const el = document.createElementNS(NS, name);
  for (const k in attrs) el.setAttribute(k, attrs[k]);
  parent.append(el);
};

// One entry per bubble: colour key, centre x, centre y, radius
const ink = { p: '#ED7992', t: '#54BDBD', o: '#F69D44', y: '#FFCF5C', b: '#5EA9DD', v: '#BF8DC0' };
const bubbles = `v 1592 427.5 42;p 1588 523.6 42;b 1562 486 42;t 1492.5 484 42;t 1526 429.6 42;t 1604 482 42;
p 1318 539.6 42;b 1292 502 42;t 1380 539.6 42;v 1444 546 42;b 1473 551.5 42;o 1418 507.6 42;v 1500 590 42;p 1476 525.7 42;t 1462 592 42;
b 1556 551.5 42;p 1583.5 590 42;p 1540 626 34;y 1538 572 42;y 1284 622 34;y 1338 622 34;b 1304 672 34;p 1412 633.6 34;b 1460 664 34;b 1494 699.7 34;
p 1576 711.6 14;v 1574 678 34;p 1392 706 14;b 1230 727.6 14;y 1324 726 14;b 1440 735.4 14;y 1170 716 14;o 1548 735.4 14;p 1480 752 14;y 1520 752 14;
t 1406 768 14;p 1252 773.6 14;p 1312 777.7 14;o 1508 777.7 14;t 1576 775.7 14;p 1548 791.7 14;p 1606 789.6 14;t 1170 772 14;v 1248 812 14;
y 1347 781 9;y 1287 792.7 9;b 1193 790.6 9;p 1409 797 9;p 1479 806.6 9;b 1077 800.4 9;y 1519 816.5 9;y 997 816.5 9;
p 970.6 818.5 7;t 1154.7 813 7;t 1222.6 832.5 7;o 1317 834.5 7;p 1438.6 838.6 7;y 1377.5 822.6 7;y 1107 843 7;y 1027 859 7;p 1347 859 7;b 1549 859 7;p 1508.7 848.5 7;t 1227 868.6 7;
b 1103 822.6 5;y 1145 829 5;p 1083 845 5;p 1125 845 5;t 1077 852.6 5;v 1013 854.6 5;o 973 864.5 5;o 1063 861 5;t 1057 868.6 5;v 993 870.7 5;y 953 880.5 5;
b 1205 840.7 5;p 1185 856.7 5;b 1278.6 854.6 5;y 1299 838.6 5;p 1367 818.5 5;y 1347 834.5 5;p 1394.7 864.5 5;v 1415 848.5 5;b 1331 884.6 5;t 1479 847 5;
y 1495 864.5 5;v 1474.7 880.5 5;p 1530.7 840.7 5;p 1551 824.7 5;t 1539 878.4 5`;
bubbles.split(';').forEach(row => {
  const [c, cx, cy, r] = row.trim().split(' ');
  add(document.getElementById('bubbles'), 'circle', { cx, cy, r, fill: ink[c], 'fill-opacity': .7 });
});

// Axes: base line plus ticks
const axis = (id, y, x0, x1, ticks, len) =>
  document.getElementById(id).setAttribute('d', `M${x0} ${y}H${x1}` + ticks.map(x => `M${x} ${y}v${len}`).join(''));
axis('time-axis', 890, 919, 1620, [922, 992, 1062, 1130, 1200, 1270, 1340, 1410, 1478, 1548, 1617], 22);
axis('year-axis', 808, 2094, 2558, [2096, 2142, 2189, 2234, 2280, 2326, 2373, 2419, 2464, 2510, 2556.5], 21);

// Heatmap: one letter per cell, one word per parent term
const heat = { a: '#5C6ABF', b: '#6F62B5', c: '#9755A7', d: '#A84FA0', e: '#D04596', f: '#E93D8B', g: '#F43985', h: '#FF3582', i: '#6567BA' };
for (const c of 'gfhghf geeaaf fhhdhe fefhgh ehhccc dgdedi daeedi caacdi cddcdi ccccdd cddccc bdaaaa bbbaaa ababba abbbbb abaaaa aaabba'.replace(/ /g, '')) {
  const cell = document.createElement('i');
  cell.style.backgroundColor = heat[c];
  document.getElementById('heat').append(cell);
}

// Dot rings of the research council mark, fading to the right
const rings = document.getElementById('erc-dots');
for (let k = 1; k <= 10; k++) {
  const R = 6 + k * 6.1, n = Math.round(8 + k * 3.4);
  for (let j = 0; j < n; j++) {
    const a = (j + (k % 2) / 2) / n * Math.PI * 2;
    const x = Math.cos(a) * R, y = Math.sin(a) * R;
    add(rings, 'circle', { cx: (1732 + x).toFixed(1), cy: (1979 + y).toFixed(1), r: (3.3 - Math.abs(k - 4) * .3).toFixed(2), fill: '#777', opacity: Math.max(.12, Math.min(1, 1 - (x - 5) / 60)).toFixed(2) });
  }
}
```
